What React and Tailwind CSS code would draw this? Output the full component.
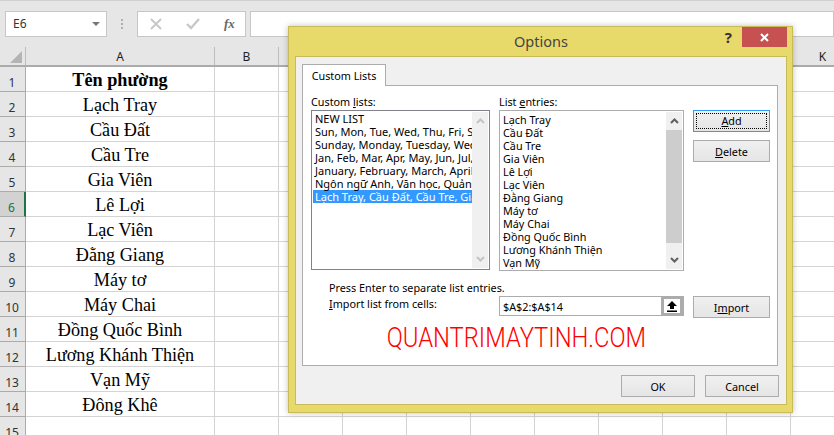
const rows = [
  "Tên phường",
  "Lạch Tray",
  "Cầu Đất",
  "Cầu Tre",
  "Gia Viên",
  "Lê Lợi",
  "Lạc Viên",
  "Đằng Giang",
  "Máy tơ",
  "Máy Chai",
  "Đồng Quốc Bình",
  "Lương Khánh Thiện",
  "Vạn Mỹ",
  "Đông Khê",
  "",
];

const columns = ["B", "C", "D", "E", "F", "G", "H", "I", "J", "K"];

const customLists = [
  "NEW LIST",
  "Sun, Mon, Tue, Wed, Thu, Fri, Sat",
  "Sunday, Monday, Tuesday, Wednesday",
  "Jan, Feb, Mar, Apr, May, Jun, Jul, Aug",
  "January, February, March, April, May",
  "Ngôn ngữ Anh, Văn học, Quản trị",
  "Lạch Tray, Cầu Đất, Cầu Tre, Gia Viên",
];

const entries = rows.slice(1, 13);

function ScrollBar({ dim }) {
  const arrow = dim ? "#c4c4c4" : "#606060";
  return (
    <div className="w-[16px] shrink-0 flex flex-col bg-[#f0f0f0]">
      <div className="h-[18px] flex items-center justify-center">
        <svg width="9" height="6" viewBox="0 0 9 6" fill="none" stroke={arrow} strokeWidth="2">
          <path d="M1 5l3.5-3.5L8 5" />
        </svg>
      </div>
      {dim ? null : <div className="h-[113px] bg-[#cdcdcd]" />}
      <div className="mt-auto h-[19px] flex items-center justify-center">
        <svg width="9" height="6" viewBox="0 0 9 6" fill="none" stroke={arrow} strokeWidth="2">
          <path d="M1 1l3.5 3.5L8 1" />
        </svg>
      </div>
    </div>
  );
}

function DialogButton({ focused, small, className = "", children }) {
  return (
    <button
      type="button"
      className={`h-[22px] shrink-0 border bg-gradient-to-b from-[#f0f0f0] to-[#e5e5e5] text-center text-black ${
        small ? "w-[74px]" : "w-[77px]"
      } ${focused ? "border-[#3399ff] p-[2px]" : "border-[#acacac]"} ${className}`}
    >
      {children}
    </button>
  );
}

function Sheet() {
  return (
    <div className="flex flex-col">
      <div className="box-content flex h-[18px] border-b-2 border-[#ababab] bg-[#e6e6e6]">
        <div className="relative w-[26px] shrink-0 border-r border-[#bdbdbd]">
          <div className="absolute bottom-[2px] right-[3px] h-0 w-0 border-b-[12px] border-l-[12px] border-b-[#b4b4b4] border-l-transparent" />
        </div>
        <div className="w-[189px] shrink-0 border-r border-[#bdbdbd] text-center text-[12px] leading-[20px] text-[#1f1f1f]">
          A
        </div>
        {columns.map((c) => (
          <div
            key={c}
            className="w-[64px] shrink-0 border-r border-[#bdbdbd] text-center text-[12px] leading-[20px] text-[#1f1f1f]"
          >
            {c}
          </div>
        ))}
      </div>
      {rows.map((text, i) => (
        <div key={i} className="flex h-[25px]">
          <div
            className={`w-[26px] shrink-0 border-b border-b-[#ababab] pr-px text-center text-[12px] leading-[31px] ${
              i === 5
                ? "border-r-2 border-r-[#217346] bg-[#d2d2d2] text-[#217346]"
                : "border-r border-r-[#ababab] bg-[#e6e6e6] text-[#333]"
            }`}
          >
            {i + 1}
          </div>
          <div
            className={`w-[189px] shrink-0 border-b border-r border-[#d4d4d4] pt-px text-center font-['Liberation_Serif',serif] text-[18.2px] leading-[24px] text-black ${
              i === 0 ? "font-bold" : ""
            }`}
          >
            {text}
          </div>
          {columns.map((c) => (
            <div key={c} className="w-[64px] shrink-0 border-b border-r border-[#d4d4d4]" />
          ))}
        </div>
      ))}
    </div>
  );
}

function OptionsDialog() {
  return (
    <div className="absolute left-[288px] top-[26px] flex h-[387px] w-[505px] flex-col border border-[#c9ba5a] bg-[#e8d96b] pb-[7px] pl-[6px] pr-[5px] text-[10.8px] leading-[13px] text-black shadow-[0_0_6px_rgba(0,0,0,0.25)]">
      <div className="relative h-[29px] shrink-0 text-center text-[14.5px] leading-[28px] text-[#444]">
        Options
        <div className="absolute right-[55px] top-0 text-[15px] font-bold leading-[21px] text-[#333]">?</div>
        <div className="absolute right-0 top-0 flex h-[20px] w-[45px] items-center justify-center bg-[#c75050]">
          <svg width="9" height="9" viewBox="0 0 9 9" stroke="#fff" strokeWidth="2">
            <path d="M1 1l7 7M8 1L1 8" />
          </svg>
        </div>
      </div>

      <div className="flex flex-1 flex-col border border-[#c9ba5a] bg-[#f0f0f0] pl-[6px] pr-[8px] pt-[7px]">
        <div className="relative z-10 -mb-px flex h-[22px] w-[84px] items-center justify-center border border-b-0 border-[#acacac] bg-white">
          Custom Lists
        </div>
        <div className="flex h-[281px] flex-col border border-[#acacac] bg-white px-[8px] pt-[9px]">
          <div className="flex gap-[9px]">
            <div className="w-[179px] shrink-0">
              <div className="mb-[2px] h-[13px]">
                Custom <u>l</u>ists:
              </div>
              <div className="flex h-[160px] border border-[#82828c] p-[1px]">
                <div className="min-w-0 flex-1 overflow-hidden text-[11px]">
                  {customLists.map((item, i) => (
                    <div
                      key={item}
                      className={`h-[13px] whitespace-nowrap pl-[2px] ${i === 6 ? "bg-[#3399ff] text-white" : ""}`}
                    >
                      {item}
                    </div>
                  ))}
                </div>
                <ScrollBar dim />
              </div>
            </div>
            <div className="w-[185px] shrink-0">
              <div className="mb-[2px] h-[13px]">
                List <u>e</u>ntries:
              </div>
              <div className="flex h-[161px] border border-[#acacac] p-[1px]">
                <div className="min-w-0 flex-1 overflow-hidden pl-[2px] pt-[1px]">
                  {entries.map((item) => (
                    <div key={item} className="h-[13px] whitespace-nowrap">
                      {item}
                    </div>
                  ))}
                </div>
                <ScrollBar />
              </div>
            </div>
            <div className="flex flex-col gap-[8px] pt-[15px]">
              <DialogButton focused>
                <span className="block h-full border border-dotted border-black leading-[14px]">
                  <u>A</u>dd
                </span>
              </DialogButton>
              <DialogButton>
                <u>D</u>elete
              </DialogButton>
            </div>
          </div>

          <div className="mt-[10px] pl-[18px]">Press Enter to separate list entries.</div>
          <div className="mt-[3px] flex items-start">
            <div className="w-[188px] shrink-0 pl-[18px]">
              <u>I</u>mport list from cells:
            </div>
            <div className="mt-[-1px] flex h-[20px] w-[185px] shrink-0 items-center justify-between border border-[#acacac] pl-[3px]">
              $A$2:$A$14
              <div className="flex h-[20px] w-[22px] items-center justify-center border-[3px] border-[#acacac] bg-white">
                <svg width="10" height="11" viewBox="0 0 10 11">
                  <path d="M5 0L0 5h3v3h4V5h3zM0 9.5h10v1.5H0z" fill="#000" />
                </svg>
              </div>
            </div>
            <DialogButton className="ml-[9px] mt-[-1px]">
              I<u>m</u>port
            </DialogButton>
          </div>

          <div className="mt-[8px] origin-left scale-x-[.88] whitespace-nowrap pl-[86px] font-['Roboto',sans-serif] text-[27px] font-light leading-[24px] text-[#ff0000]">
            QUANTRIMAYTINH.COM
          </div>
        </div>

        <div className="-mr-px mt-[9px] flex justify-end gap-[10px]">
          <DialogButton small>OK</DialogButton>
          <DialogButton small>Cancel</DialogButton>
        </div>
      </div>
    </div>
  );
}

export default function App() {
  return (
    <div className="relative h-[435px] w-[834px] overflow-hidden bg-white font-['Noto_Sans',sans-serif]">
      <div className="flex h-[47px] items-start gap-[4px] border-t border-[#d0d0d0] bg-[#e6e6e6] pt-[10px]">
        <div className="ml-[5px] flex h-[26px] w-[102px] items-center justify-between border border-[#c6c6c6] bg-white pl-[7px] pr-[6px] text-[12px] text-[#333]">
          E6
          <div className="h-0 w-0 border-x-[4px] border-t-[4px] border-x-transparent border-t-[#777]" />
        </div>
        <div className="flex h-[26px] w-[22px] shrink-0 flex-col items-center justify-center gap-[2px]">
          <span className="h-[2px] w-[2px] bg-[#b0b0b0]" />
          <span className="h-[2px] w-[2px] bg-[#b0b0b0]" />
          <span className="h-[2px] w-[2px] bg-[#b0b0b0]" />
        </div>
        <div className="flex h-[26px] w-[109px] shrink-0 items-center gap-[24px] border border-[#c6c6c6] bg-white pl-[12px]">
          <svg width="12" height="12" viewBox="0 0 12 12" stroke="#c8c8c8" strokeWidth="2" fill="none">
            <path d="M1 1l10 10M11 1L1 11" />
          </svg>
          <svg width="14" height="12" viewBox="0 0 14 12" stroke="#c8c8c8" strokeWidth="2.4" fill="none">
            <path d="M1 6l4 4 8-9" />
          </svg>
          <span className="font-['Liberation_Serif',serif] text-[13px] font-bold italic text-[#666]">fx</span>
        </div>
        <div className="h-[26px] flex-1 border border-[#c6c6c6] bg-white" />
      </div>
      <Sheet />
      <OptionsDialog />
    </div>
  );
}
